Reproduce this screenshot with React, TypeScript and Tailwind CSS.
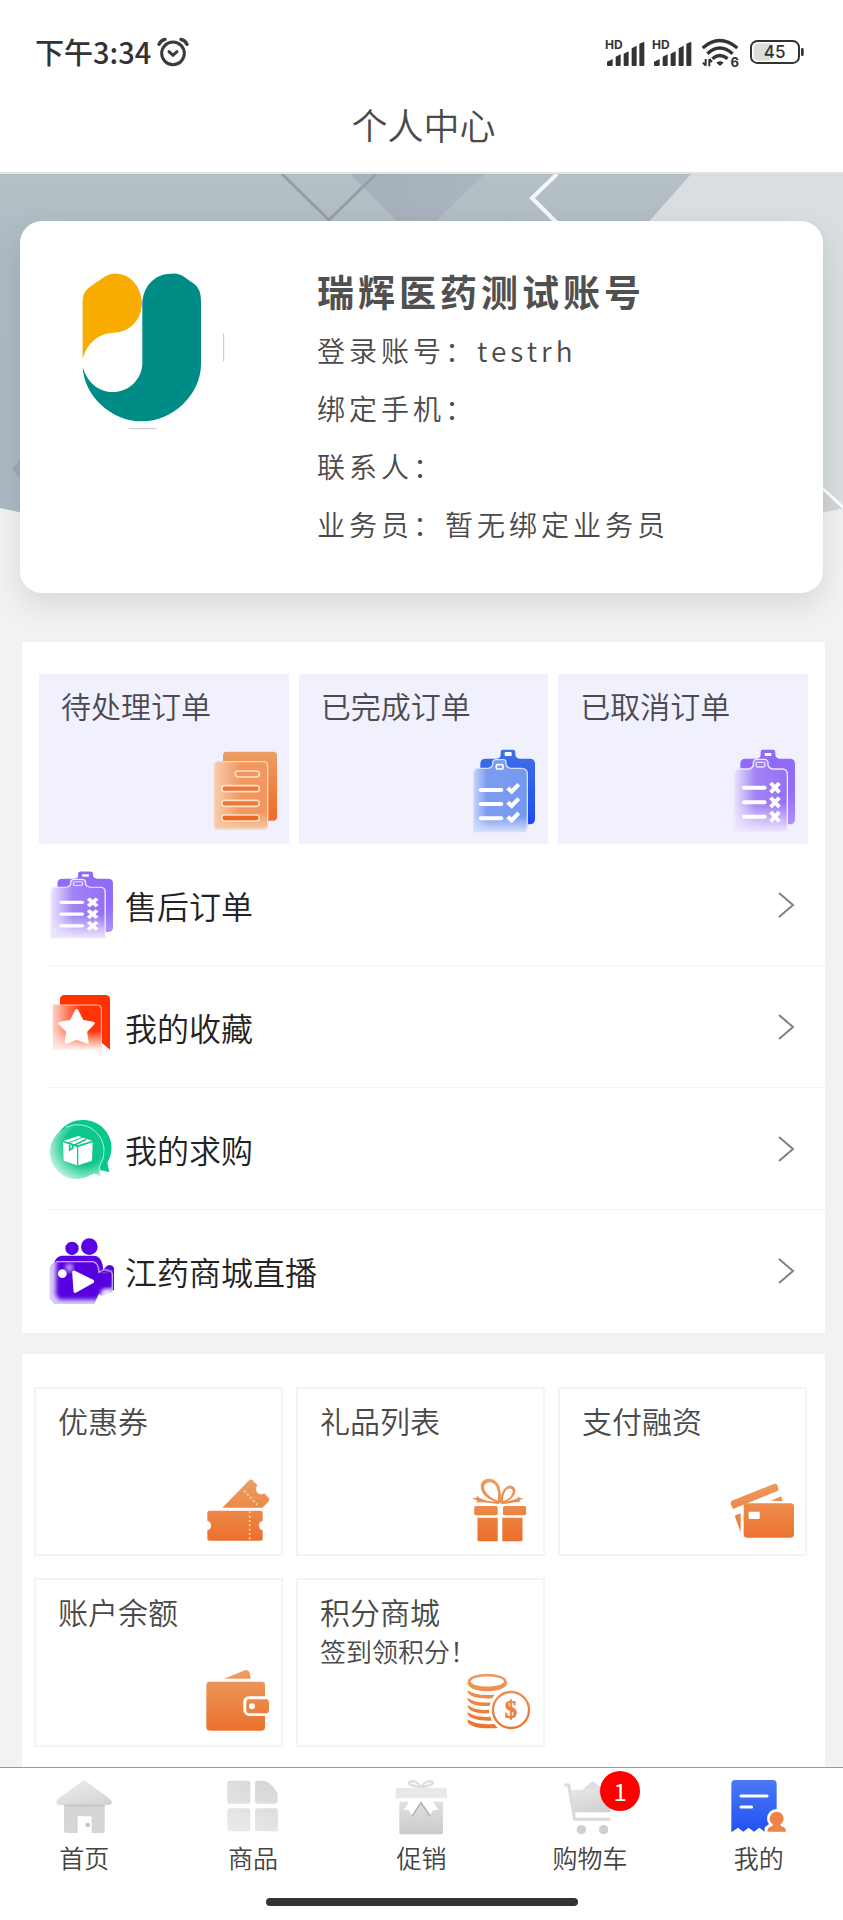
import type { ReactNode } from 'react';

type IconProps = { className?: string };

const orange = 'url(#orange)';

function SharedGradients() {
  return (
    <svg width="0" height="0" className="absolute" aria-hidden="true">
      <defs>
        <linearGradient id="orange" gradientUnits="userSpaceOnUse" x1="0" y1="0" x2="0" y2="200">
          <stop offset="0" stopColor="#eda066" />
          <stop offset="1" stopColor="#ec6f2a" />
        </linearGradient>
        <linearGradient id="grey" gradientUnits="userSpaceOnUse" x1="0" y1="0" x2="40" y2="130">
          <stop offset="0" stopColor="#f0f0f1" />
          <stop offset="1" stopColor="#cfcfd0" />
        </linearGradient>
        <linearGradient id="greyFlip" gradientUnits="userSpaceOnUse" x1="120" y1="0" x2="40" y2="170">
          <stop offset="0" stopColor="#d6d6d7" />
          <stop offset="1" stopColor="#ebebec" />
        </linearGradient>
      </defs>
    </svg>
  );
}

function AlarmIcon() {
  return (
    <svg width="32" height="30" viewBox="0 0 96 90" fill="none" stroke="#3a3a3a" strokeLinecap="round">
      <circle cx="48" cy="49" r="34" strokeWidth="9" />
      <path d="M36 44l12 11 12-11" strokeWidth="9" />
      <path d="M6 22Q11 10 24 7M90 22Q85 10 72 7" strokeWidth="10" />
    </svg>
  );
}

function SignalIcon() {
  return (
    <span className="relative h-[30px] w-10">
      <span className="absolute top-0 left-0 font-['Inter','Liberation_Sans',sans-serif] text-[12px] leading-[16px] font-bold">
        HD
      </span>
      <svg width="40" height="30" viewBox="0 0 120 90" fill="#333333" aria-hidden="true">
        <path d="M6 84v-10l17-8v18q0 3-3 3H9q-3 0-3-3z" />
        <path d="M32 84V59l15-7v32q0 3-3 3h-9q-3 0-3-3z" />
        <path d="M56 84V50l15-7v41q0 3-3 3h-9q-3 0-3-3z" />
        <path d="M80 84V34l15-8v58q0 3-3 3h-9q-3 0-3-3z" />
        <path d="M103 84V20l15-6v70q0 3-3 3h-9q-3 0-3-3z" />
      </svg>
    </span>
  );
}

function WifiIcon() {
  return (
    <span className="relative h-[30px] w-[38px]">
      <svg width="38" height="30" viewBox="0 0 114 90" fill="none" stroke="#333333" strokeWidth="10" aria-hidden="true">
        <path d="M5 33Q56-12 109 33" />
        <path d="M19 50Q56 16 95 50" />
        <path d="M34 65Q56 46 80 65" />
        <path d="M46 77Q57 69 68 77L57 87z" fill="#333333" stroke="none" />
        <path d="M14 66v20M14 86l-8-9M25 88V66M25 66l8 9" strokeWidth="6" />
      </svg>
      <span className="absolute right-0 -bottom-1 font-['Inter','Liberation_Sans',sans-serif] text-[13px] leading-[18px] font-bold">
        6
      </span>
    </span>
  );
}

function BatteryIcon() {
  return (
    <svg width="54" height="24" viewBox="0 0 162 72">
      <rect x="3" y="3" width="144" height="66" rx="19" fill="#ffffff" stroke="#333333" strokeWidth="6" />
      <path d="M27 10h34v52H27q-16 0-16-16V26q0-16 16-16z" fill="#dddddd" />
      <rect x="153" y="24" width="8" height="24" rx="4" fill="#333333" />
      <text x="74" y="54" textAnchor="middle" fontSize="51" fontWeight="500" fill="#333333" fontFamily="Inter, sans-serif">
        45
      </text>
    </svg>
  );
}

function BrandLogo() {
  return (
    <svg width="144" height="158" viewBox="0 0 432 474" role="img" aria-label="瑞辉医药" className="shrink-0">
      <path d="M2 264V84Q2 62 22 46L62 18Q84 3 106 5C148 8 178 46 180 92C178 148 140 180 96 182C42 184 10 222 2 264z" fill="#f8ac00" />
      <path
        d="M181 94C183 40 222 3 270 5Q290 3 310 17L338 37Q357 52 357 86V276C357 368 272 448 180 448C88 448 6 372 2 284C16 336 56 360 92 360C140 360 181 322 181 272z"
        fill="#008c86"
      />
      <path d="M425 184v84M140 470h84" stroke="#c4c4c4" strokeWidth="3" />
    </svg>
  );
}

function HeroBackdrop() {
  return (
    <svg
      className="absolute inset-x-0 top-0 h-[352px] w-full"
      viewBox="0 0 843 352"
      preserveAspectRatio="none"
      aria-hidden="true"
    >
      <defs>
        <linearGradient id="hero" x1="0" y1="0" x2="0" y2="1">
          <stop offset="0" stopColor="#b4c0c5" />
          <stop offset="0.3" stopColor="#aebac4" />
          <stop offset="1" stopColor="#adb9c4" />
        </linearGradient>
        <linearGradient id="heroDark" x1="0" y1="0" x2="1" y2="0">
          <stop offset="0.3" stopColor="#a7b1bc" />
          <stop offset="1" stopColor="#aab5be" />
        </linearGradient>
        <clipPath id="heroClip">
          <path d="M0 0H843V334Q421 430 0 334z" />
        </clipPath>
      </defs>
      <g clipPath="url(#heroClip)">
        <rect width="843" height="352" fill="url(#hero)" />
        <path d="M350 0H485L437 46V80H430L397 47z" fill="url(#heroDark)" />
        <path d="M282 0L329 46L376 0" fill="none" stroke="#939ea7" strokeWidth="3" />
        <path d="M691 0H843V352H380z" fill="#d9dee1" />
        <path d="M557 0L532 24L557 49" fill="none" stroke="#f5f8fa" strokeWidth="4" />
        <path d="M20 286L12 295L20 305z" fill="#a0acb6" />
        <path d="M820 312L843 334V352H800z" fill="#d3d6d9" />
        <path d="M820 312L846 336" stroke="#ffffff" strokeWidth="3" />
      </g>
    </svg>
  );
}

function PendingIcon({ className }: IconProps) {
  return (
    <svg viewBox="0 0 195 252" className={className} aria-hidden="true">
      <defs>
        <linearGradient id="docFront" x1="0" y1="0" x2="0.5" y2="0">
          <stop offset="0" stopColor="#f9cdab" />
          <stop offset="1" stopColor="#f1975f" />
        </linearGradient>
        <linearGradient id="docFade" x1="0" y1="0" x2="0" y2="1">
          <stop offset="0.75" stopColor="#f7c7a6" stopOpacity="0" />
          <stop offset="1" stopColor="#f7c7a6" />
        </linearGradient>
      </defs>
      <rect x="30" y="8" width="162" height="207" rx="11" fill={orange} />
      <rect x="4" y="38" width="160" height="202" rx="11" fill="url(#docFront)" />
      <rect x="4" y="38" width="160" height="202" rx="11" fill="url(#docFade)" stroke="#fbd8bd" strokeWidth="4" />
      <g fill="#e8793b" stroke="#fddfc7" strokeWidth="5">
        <rect x="67" y="66" width="72" height="18" rx="9" fill="#ef9660" />
        <rect x="26" y="110" width="113" height="18" rx="9" />
        <rect x="26" y="154" width="113" height="18" rx="9" />
        <rect x="26" y="198" width="113" height="18" rx="9" fill="#ee6a1e" />
      </g>
    </svg>
  );
}

const clipboardPath =
  'M41 29H74Q86 27 86 17V9Q86 2 93 2H123Q130 2 130 9V17Q131 27 143 29H173Q189 29 189 45V210Q189 226 173 226H41Q25 226 25 210V45Q25 29 41 29z';

function DoneIcon({ className }: IconProps) {
  return (
    <svg viewBox="0 0 195 252" className={className} aria-hidden="true">
      <defs>
        <linearGradient id="blueBack" x1="0" y1="0" x2="0" y2="1">
          <stop offset="0" stopColor="#3f70e6" />
          <stop offset="1" stopColor="#1f4df0" />
        </linearGradient>
        <linearGradient id="blueFront" x1="0" y1="0" x2="1" y2="0">
          <stop offset="0" stopColor="#c3d3fa" />
          <stop offset="0.25" stopColor="#7d9cf0" />
          <stop offset="1" stopColor="#7399ee" />
        </linearGradient>
        <linearGradient id="blueFade" x1="0" y1="0" x2="0" y2="1">
          <stop offset="0.78" stopColor="#d5def9" stopOpacity="0" />
          <stop offset="1" stopColor="#d5def9" />
        </linearGradient>
      </defs>
      <path d={clipboardPath} fill="url(#blueBack)" />
      <rect x="98" y="9" width="21" height="12" rx="2" fill="#ffffff" />
      <path
        d="M5 248V74Q5 58 21 58H48Q60 56 62 46V40Q64 32 72 32H94Q102 32 102 40V46Q104 56 116 58H148Q166 58 166 74V232L160 248z"
        fill="url(#blueFront)"
      />
      <path
        d="M5 248V74Q5 58 21 58H48Q60 56 62 46V40Q64 32 72 32H94Q102 32 102 40V46Q104 56 116 58H148Q166 58 166 74V232L160 248z"
        fill="url(#blueFade)"
        stroke="#d3e0fc"
        strokeWidth="4"
      />
      <rect x="73" y="47" width="20" height="13" rx="4" fill="none" stroke="#ffffff" strokeWidth="5" />
      <path d="M26 123H88M26 165H88M26 208H88" stroke="#ffffff" strokeWidth="12" strokeLinecap="round" />
      <path
        d="M107 117l12 11 21-22M107 160l12 11 21-22M107 203l12 11 21-22"
        fill="none"
        stroke="#ffffff"
        strokeWidth="12"
      />
    </svg>
  );
}

function CancelledIcon({ className }: IconProps) {
  return (
    <svg viewBox="0 0 195 252" preserveAspectRatio="none" className={className} aria-hidden="true">
      <defs>
        <linearGradient id="violetBack" x1="0" y1="0" x2="0" y2="1">
          <stop offset="0" stopColor="#9069f6" />
          <stop offset="0.6" stopColor="#946ff8" />
          <stop offset="1" stopColor="#ad93fb" />
        </linearGradient>
        <linearGradient id="violetFront" x1="0" y1="0" x2="1" y2="0">
          <stop offset="0" stopColor="#eae4fd" />
          <stop offset="0.4" stopColor="#a284f3" />
          <stop offset="1" stopColor="#956ff6" />
        </linearGradient>
        <linearGradient id="violetFade" x1="0" y1="0" x2="0" y2="1">
          <stop offset="0.6" stopColor="#ece7fd" stopOpacity="0" />
          <stop offset="1" stopColor="#ece7fd" />
        </linearGradient>
      </defs>
      <path d={clipboardPath} fill="url(#violetBack)" />
      <rect x="98" y="12" width="20" height="9" fill="#ffffff" />
      <path
        d="M6 248V76Q6 60 22 60H50Q62 58 64 48V40Q66 31 74 31H98Q106 31 108 40V48Q110 58 122 60H150Q166 60 166 76V248z"
        fill="url(#violetFront)"
      />
      <path
        d="M6 248V76Q6 60 22 60H50Q62 58 64 48V40Q66 31 74 31H98Q106 31 108 40V48Q110 58 122 60H150Q166 60 166 76V248z"
        fill="url(#violetFade)"
        stroke="#efe9fe"
        strokeWidth="4"
      />
      <rect x="72" y="40" width="27" height="14" rx="5" fill="none" stroke="#e9e0fe" strokeWidth="4" />
      <path d="M36 116H98M36 160H98M36 203H98" stroke="#ffffff" strokeWidth="12" strokeLinecap="round" />
      <path
        d="M116 102l26 28M142 102l-26 28M116 146l26 28M142 146l-26 28M116 189l26 28M142 189l-26 28"
        stroke="#ffffff"
        strokeWidth="12"
      />
    </svg>
  );
}

function FavoriteIcon({ className }: IconProps) {
  return (
    <svg viewBox="0 0 198 198" className={className} aria-hidden="true">
      <defs>
        <linearGradient id="redFront" x1="0" y1="0" x2="1" y2="0">
          <stop offset="0" stopColor="#ffd0c6" />
          <stop offset="0.35" stopColor="#ff6a48" />
          <stop offset="0.6" stopColor="#ff3507" />
        </linearGradient>
        <linearGradient id="redFade" x1="0" y1="0" x2="0" y2="1">
          <stop offset="0.5" stopColor="#ffe9e4" stopOpacity="0" />
          <stop offset="0.85" stopColor="#ffe9e4" />
          <stop offset="1" stopColor="#fffafa" />
        </linearGradient>
        <linearGradient id="redEdge" x1="0" y1="0" x2="0" y2="1">
          <stop offset="0.5" stopColor="#ffc4b6" />
          <stop offset="0.9" stopColor="#fff3f0" />
        </linearGradient>
      </defs>
      <path d="M33 17Q33 3 47 3H169Q183 3 183 17V167L158 146H33z" fill="#ff3200" />
      <path d="M13 33H146Q157 33 157 45V186L136 166H13z" fill="url(#redFront)" />
      <path d="M13 33H146Q157 33 157 45V186L136 166H13z" fill="url(#redFade)" stroke="url(#redEdge)" strokeWidth="3" />
      <path
        d="M83 50L99 82L132 88L109 112L114 144L83 132L52 144L57 112L33 88L67 82z"
        fill="#ffffff"
        stroke="#ffffff"
        strokeWidth="10"
        strokeLinejoin="round"
      />
    </svg>
  );
}

function PurchaseIcon({ className }: IconProps) {
  return (
    <svg viewBox="0 0 198 198" className={className} aria-hidden="true">
      <defs>
        <radialGradient id="greenFront" cx="0.66" cy="0.36" r="0.74">
          <stop offset="0.5" stopColor="#0fc68d" />
          <stop offset="1" stopColor="#d0f6e9" />
        </radialGradient>
      </defs>
      <path d="M103 12A84 84 0 0 1 175 140L181 168L152 162A84 84 0 1 1 103 12z" fill="#07c78b" />
      <path d="M83 29A80 80 0 0 1 152 150L153 178L132 172A80 80 0 1 1 83 29z" fill="url(#greenFront)" />
      <path d="M50 34A80 80 0 0 1 152 150L153 178L132 172" fill="none" stroke="#b5f0dc" strokeWidth="3" />
      <path d="M42 79L84 93V148L44 134z" fill="#ffffff" />
      <path d="M131 79L88 93V148L129 134z" fill="#ffffff" />
      <path d="M44 74L88 60L129 74L86 88z" fill="#ffffff" />
      <path d="M62 86V102L71 97V90L112 70" fill="none" stroke="#12c48c" strokeWidth="5" />
      <path d="M60 80L102 63" stroke="#12c48c" strokeWidth="3" />
    </svg>
  );
}

function LiveIcon({ className }: IconProps) {
  return (
    <svg viewBox="0 0 198 204" className={className} aria-hidden="true">
      <defs>
        <filter id="soft" x="-20%" y="-20%" width="140%" height="140%">
          <feGaussianBlur stdDeviation="6" />
        </filter>
        <clipPath id="bodyClip">
          <path d="M24 74H132Q149 76 151 104L158 108L190 100V165L158 176L150 170L136 201H16L1 184V96Q3 76 24 74z" />
        </clipPath>
      </defs>
      <circle cx="69" cy="34" r="20" fill="#5904e3" />
      <circle cx="121" cy="29" r="25" fill="#5904e3" />
      <path d="M38 56H136Q156 58 161 84L162 100L174 86Q188 80 195 92V160H20L16 76Q22 58 38 56z" fill="#5904e3" />
      <g clipPath="url(#bodyClip)">
        <rect width="198" height="204" fill="#d9cdf6" />
        <path d="M22 66H146L160 104L200 90V150L160 164L146 188H30L20 172z" fill="#5602df" filter="url(#soft)" />
        <circle cx="61" cy="92" r="12" fill="#c5a6f7" filter="url(#soft)" />
        <circle cx="172" cy="170" r="14" fill="#eee8fc" filter="url(#soft)" />
      </g>
      <path d="M20 74H132Q149 77 150 106Q166 94 184 102Q190 106 190 112V160" fill="none" stroke="#c0a3f5" strokeWidth="4" />
      <circle cx="40" cy="110" r="13" fill="#ffffff" />
      <path d="M75 106L130 133L79 162z" fill="#ffffff" stroke="#ffffff" strokeWidth="11" strokeLinejoin="round" />
    </svg>
  );
}

function CouponIcon({ className }: IconProps) {
  return (
    <svg viewBox="0 0 198 198" className={className} fill={orange} aria-hidden="true">
      <path d="M52 95L131 14Q137 7 143 13L157 28C146 42 160 62 178 52L191 66Q195 72 190 77L172 95z" />
      <path d="M13 104H167Q173 104 173 110V134A15 15 0 0 0 173 163V188Q173 194 167 194H13Q7 194 7 188V163A15 15 0 0 0 7 134V110Q7 104 13 104z" />
      <path d="M118 44L162 92M134 106V192" stroke="#fbd7bd" strokeWidth="5" strokeDasharray="6 7" />
    </svg>
  );
}

function GiftIcon({ className }: IconProps) {
  return (
    <svg viewBox="0 0 198 202" className={className} fill={orange} aria-hidden="true">
      <rect x="20" y="92" width="72" height="28" rx="5" />
      <rect x="108" y="92" width="71" height="28" rx="5" />
      <path d="M30 128H92V200H34Q30 200 30 196zM106 128H168V196Q168 200 164 200H106z" />
      <path
        fillRule="evenodd"
        d="M100 84C62 74 38 54 40 30C43 2 86 0 98 34C102 48 103 68 100 84zM92 76C96 54 92 22 70 19C52 19 46 34 54 46C62 60 76 70 92 76z"
      />
      <path
        fillRule="evenodd"
        d="M100 84C98 60 110 32 128 29C148 30 152 50 138 64C128 76 114 82 100 84zM108 76C124 74 138 60 138 46C136 36 122 36 116 46C110 56 108 66 108 76z"
      />
      <path d="M96 76C70 82 50 74 34 66L30 60L28 66L14 68L30 76L26 82C52 78 72 84 96 86zM104 76C120 80 138 74 152 68L156 62L160 68L172 67L158 75L162 80C142 78 122 86 104 86z" />
    </svg>
  );
}

function PaymentIcon({ className }: IconProps) {
  return (
    <svg viewBox="0 0 198 198" className={className} fill={orange} aria-hidden="true">
      <path d="M9 74L134 24Q142 21 145 27L149 38Q149 43 145 45L12 99L5 84Q4 77 9 74z" />
      <path d="M17 119L35 112V168zM126 74L156 61L161 76z" />
      <rect x="44" y="82" width="151" height="103" rx="10" />
      <rect x="59" y="107" width="33" height="22" rx="3" fill="#ffffff" />
    </svg>
  );
}

function WalletIcon({ className }: IconProps) {
  return (
    <svg viewBox="0 0 198 198" className={className} fill={orange} aria-hidden="true">
      <path d="M57 35L120 10Q130 7 134 17L137 35z" />
      <path d="M14 44H170Q180 44 180 54V88H132Q115 90 115 104V130Q117 144 132 147H180V181Q180 191 170 191H14Q4 191 4 181V54Q4 44 14 44z" />
      <path d="M132 97H186Q192 99 192 107V128Q192 137 186 139H132Q124 138 124 132V104Q124 98 132 97z" />
      <circle cx="141" cy="118" r="9" fill="#ffffff" />
    </svg>
  );
}

function PointsIcon({ className }: IconProps) {
  return (
    <svg viewBox="0 0 198 198" className={className} fill={orange} aria-hidden="true">
      <path fillRule="evenodd" d="M2 44C4 12 116 12 120 44V50C112 80 10 80 2 50zM11 43C14 64 108 64 111 43C106 24 16 24 11 43z" />
      <path d="M2 70Q26 88 82 83L76 94Q14 98 2 76zM2 92Q26 110 70 106L68 117Q14 120 2 98zM2 114Q26 132 66 128V139Q14 142 2 120zM2 135Q26 153 70 149L74 161Q14 163 2 141zM2 157Q26 175 82 171L92 183Q14 188 2 165z" />
      <circle cx="132" cy="129" r="54" fill="#ffffff" stroke={orange} strokeWidth="7" />
      <text
        x="132"
        y="153"
        textAnchor="middle"
        fontSize="74"
        fontWeight="700"
        stroke={orange}
        strokeWidth="2"
        fontFamily="'Liberation Serif', serif"
      >
        $
      </text>
    </svg>
  );
}

function HomeIcon() {
  return (
    <svg width="56" height="56" viewBox="0 0 168 168" aria-hidden="true">
      <path d="M24 78H146V156Q146 162 140 162H107V112H65V162H30Q24 162 24 156z" fill="#d6d6d7" />
      <circle cx="95" cy="138" r="7" fill="#c4c4c5" />
      <path d="M76 8Q84 3 92 8L162 60Q168 66 168 72Q166 78 158 78H10Q2 78 1 72Q0 64 6 60z" fill="url(#grey)" />
      <path d="M26 80H146" stroke="#c2c2c3" strokeWidth="5" />
    </svg>
  );
}

function GoodsIcon() {
  return (
    <svg width="56" height="56" viewBox="0 0 168 168" fill="url(#greyFlip)" aria-hidden="true">
      <rect x="7" y="5" width="69" height="69" rx="8" />
      <path d="M98 5H118Q144 14 158 46V66Q158 74 150 74H98Q90 74 90 66V13Q90 5 98 5z" />
      <rect x="7" y="88" width="69" height="69" rx="8" />
      <rect x="90" y="88" width="69" height="69" rx="8" />
    </svg>
  );
}

function PromoIcon() {
  return (
    <svg width="56" height="56" viewBox="0 0 168 168" aria-hidden="true">
      <defs>
        <linearGradient id="promoBody" x1="0" y1="0" x2="0" y2="1">
          <stop offset="0" stopColor="#e0e0e1" />
          <stop offset="1" stopColor="#cbcbcc" />
        </linearGradient>
      </defs>
      <path d="M82 24C64 22 42 16 50 9C60 3 76 10 84 24C92 10 110 3 118 9C126 16 104 22 86 24z" fill="none" stroke="#dededf" strokeWidth="7" />
      <rect x="8" y="26" width="154" height="32" rx="4" fill="#e9e9ea" />
      <path d="M19 68H150V161Q150 166 145 166H24Q19 166 19 161z" fill="url(#promoBody)" />
      <path d="M54 60H84V70L57 112L49 94L32 92zM84 60H114L136 92L119 94L112 112L84 70z" fill="#ffffff" />
      <path d="M57 112L84 71L112 112" fill="none" stroke="#b4b4b5" strokeWidth="5" />
    </svg>
  );
}

function CartIcon() {
  return (
    <svg width="56" height="56" viewBox="0 0 168 168" aria-hidden="true">
      <path d="M60 32L92 6L126 32z" fill="#dededf" />
      <path d="M7 18H20L38 121H146" fill="none" stroke="#dadadb" strokeWidth="9" />
      <path d="M26 32H152L146 100H35z" fill="url(#grey)" />
      <circle cx="58" cy="152" r="14" fill="#d0d0d1" />
      <circle cx="125" cy="152" r="14" fill="#d0d0d1" />
    </svg>
  );
}

function MineIcon() {
  return (
    <svg width="56" height="56" viewBox="0 0 168 168" aria-hidden="true">
      <defs>
        <linearGradient id="mine" x1="0" y1="0" x2="0" y2="1">
          <stop offset="0" stopColor="#4a79f5" />
          <stop offset="1" stopColor="#2152f2" />
        </linearGradient>
      </defs>
      <path
        d="M13 3H125Q137 3 137 15V160L117 146L101 158L85 146L69 158L53 146L37 158L21 146L1 160V15Q1 3 13 3z"
        fill="url(#mine)"
      />
      <path d="M30 51H108M30 84H62" stroke="#ffffff" strokeWidth="9" strokeLinecap="round" />
      <g stroke="#ffffff" strokeWidth="18" fill="#ffffff">
        <circle cx="137" cy="119" r="20" />
        <path d="M128 136H146L164 150V158H110V150z" />
      </g>
      <g fill="#ec8446">
        <circle cx="137" cy="119" r="21" />
        <path d="M126 132H148Q146 142 158 144Q165 148 165 158H109Q109 148 116 144Q128 142 126 132z" />
      </g>
    </svg>
  );
}

const accountInfo = [
  { label: '登录账号：', value: 'testrh' },
  { label: '绑定手机：', value: '' },
  { label: '联系人：', value: '' },
  { label: '业务员：', value: '暂无绑定业务员' },
];

const orderTiles = [
  { title: '待处理订单', Icon: PendingIcon },
  { title: '已完成订单', Icon: DoneIcon },
  { title: '已取消订单', Icon: CancelledIcon },
];

const menuItems = [
  { title: '售后订单', Icon: CancelledIcon },
  { title: '我的收藏', Icon: FavoriteIcon },
  { title: '我的求购', Icon: PurchaseIcon },
  { title: '江药商城直播', Icon: LiveIcon },
];

const services = [
  { title: '优惠券', Icon: CouponIcon },
  { title: '礼品列表', Icon: GiftIcon },
  { title: '支付融资', Icon: PaymentIcon },
  { title: '账户余额', Icon: WalletIcon },
  { title: '积分商城', note: '签到领积分！', Icon: PointsIcon },
];

const tabs: { title: string; icon: ReactNode; badge?: number }[] = [
  { title: '首页', icon: <HomeIcon /> },
  { title: '商品', icon: <GoodsIcon /> },
  { title: '促销', icon: <PromoIcon /> },
  { title: '购物车', icon: <CartIcon />, badge: 1 },
  { title: '我的', icon: <MineIcon /> },
];

function Header() {
  return (
    <header className="border-b-2 border-[#e2e3e3] bg-white pt-8 pb-6">
      <div className="flex h-10 items-center justify-between pr-[39px] pl-[35px] text-[#333333]">
        <div className="flex items-center gap-[6px] text-[29px] font-medium">
          <span>下午3:34</span>
          <AlarmIcon />
        </div>
        <div className="flex items-center gap-[7px]">
          <SignalIcon />
          <SignalIcon />
          <span className="flex items-center gap-[11px] pl-[2px]">
            <WifiIcon />
            <BatteryIcon />
          </span>
        </div>
      </div>
      <h1 className="mt-7 pl-1 text-center text-[36px] leading-[48px] font-[350] text-[#4a4a4a]">个人中心</h1>
    </header>
  );
}

function ProfileCard() {
  return (
    <section className="relative px-5 pt-[47px]">
      <HeroBackdrop />
      <div className="relative flex items-start rounded-[22px] bg-white py-10 pl-[62px] shadow-[0_12px_32px_rgba(0,0,0,0.11)]">
        <div className="pt-[11px]">
          <BrandLogo />
        </div>
        <div className="ml-[91px] tracking-[4px] text-[#4a4a4a]">
          <h2 className="text-[37px] leading-[60px] font-bold text-[#505050]">瑞辉医药测试账号</h2>
          {accountInfo.map((info) => (
            <p key={info.label} className="text-[28px] leading-[58px] font-[350]">
              {info.label}
              {info.value}
            </p>
          ))}
        </div>
      </div>
    </section>
  );
}

function OrderPanel() {
  return (
    <section className="mt-[49px] mr-[18px] ml-[22px] bg-white pt-8 pb-[2px]">
      <div className="grid grid-cols-3 gap-[10px] px-[17px]">
        {orderTiles.map(({ title, Icon }) => (
          <button
            key={title}
            type="button"
            className="flex h-[170px] flex-col justify-between bg-[#f1f0fd] px-[11px] pt-[10px] pb-[11px] text-left"
          >
            <span className="pl-[11px] text-[30px] leading-[42px] font-[350] text-[#4a4a50]">{title}</span>
            <Icon className="h-[84px] w-[65px] self-end" />
          </button>
        ))}
      </div>
      <ul className="pl-[27px]">
        {menuItems.map(({ title, Icon }, i) => (
          <li key={title} className={i > 0 ? 'border-t border-[#f3f3f3]' : ''}>
            <button type="button" className="flex h-[121px] w-full items-center pr-[30px] text-left">
              <Icon className="h-[68px] w-[66px]" />
              <span className="ml-[10px] flex-1 text-[32px] font-[350] text-[#222222]">{title}</span>
              <svg width="18" height="28" viewBox="0 0 18 28" fill="none" stroke="#808080" strokeWidth="2" aria-hidden="true">
                <path d="M2 2l14 12L2 26" />
              </svg>
            </button>
          </li>
        ))}
      </ul>
    </section>
  );
}

function ServicePanel() {
  return (
    <section className="mt-[21px] mr-[18px] ml-[22px] grow bg-white pt-[33px] pr-[18px] pb-5 pl-3">
      <div className="grid grid-cols-3 gap-x-[13px] gap-y-[22px]">
        {services.map(({ title, note, Icon }) => (
          <button
            key={title}
            type="button"
            className="relative flex h-[169px] flex-col border-2 border-[#f4f4f4] pt-[10px] pl-[22px] text-left font-[350] text-[#4a4a4a]"
          >
            <span className="text-[30px] leading-[42px]">{title}</span>
            {note && <span className="text-[26px] leading-[38px]">{note}</span>}
            <Icon className="absolute right-[10px] bottom-3 h-[66px] w-[66px]" />
          </button>
        ))}
      </div>
    </section>
  );
}

function TabBar() {
  return (
    <nav className="border-t border-[#999999] bg-white pt-[11px] pb-[14px]">
      <ul className="grid grid-cols-5">
        {tabs.map((tab) => (
          <li key={tab.title}>
            <button type="button" className="flex w-full flex-col items-center gap-1">
              <span className="relative">
                {tab.icon}
                {tab.badge && (
                  <span className="absolute -top-2 -right-[22px] flex h-10 w-10 items-center justify-center rounded-full bg-[#ff0000] text-[24px] text-white">
                    {tab.badge}
                  </span>
                )}
              </span>
              <span className="text-[25px] leading-[36px] font-[350] text-[#444444]">{tab.title}</span>
            </button>
          </li>
        ))}
      </ul>
      <div className="mx-auto mt-[23px] h-2 w-[312px] rounded-full bg-[#333333]" />
    </nav>
  );
}

function App() {
  return (
    <div className="flex min-h-screen flex-col bg-[#f2f2f2] font-['Noto_Sans_CJK_SC','Noto_Sans',sans-serif]">
      <SharedGradients />
      <Header />
      <main className="flex grow flex-col">
        <ProfileCard />
        <OrderPanel />
        <ServicePanel />
      </main>
      <TabBar />
    </div>
  );
}

export default App;
